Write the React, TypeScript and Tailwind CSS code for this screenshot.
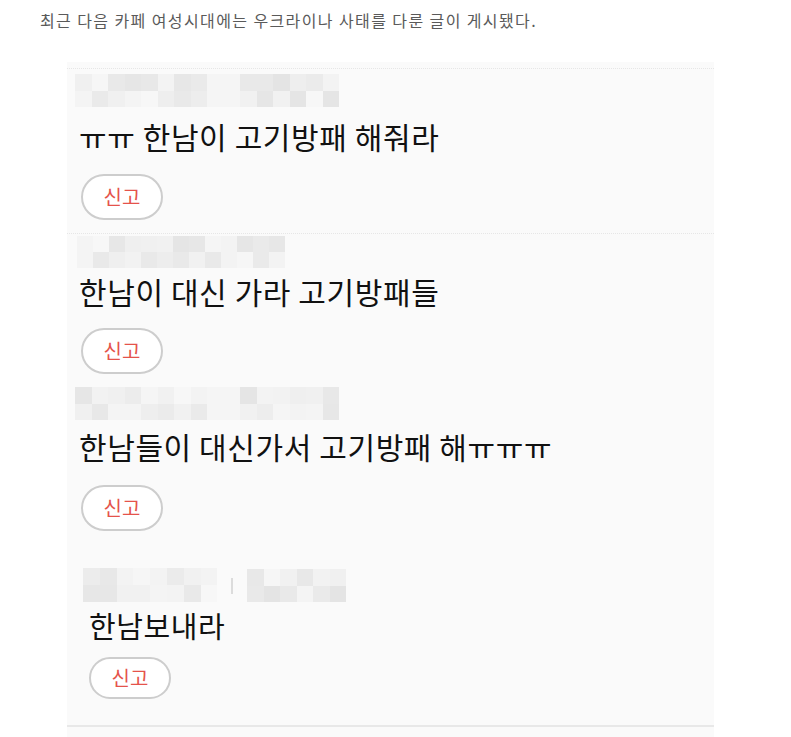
import React from 'react'

const font = { fontFamily: '"Noto Sans CJK KR", "Noto Sans", sans-serif' }

// deterministic gray shades for the pixelated (blurred) name blocks
function shades(seed: number, count: number) {
  const out: string[] = []
  let s = seed
  for (let i = 0; i < count; i++) {
    s = (s * 9301 + 49297) % 233280
    const v = 228 + Math.floor((s / 233280) * 20)
    out.push(`rgb(${v},${v},${v})`)
  }
  return out
}

function Mosaic({ cols, rows, cell, seed, light }: { cols: number; rows: number; cell: number; seed: number; light?: boolean }) {
  const c = shades(seed, cols * rows)
  return (
    <div className="grid" style={{ gridTemplateColumns: `repeat(${cols}, ${cell}px)` }}>
      {c.map((col, i) => (
        <div key={i} style={{ height: cell, background: light ? '#f5f5f5' : col }} />
      ))}
    </div>
  )
}

function ReportButton({ small }: { small?: boolean }) {
  return (
    <button
      className={`flex items-center justify-center rounded-full border-2 border-[#cdcdcd] bg-white text-[20px] text-[#e5534b] w-[82px] ${small ? 'h-[42px]' : 'h-[46px]'}`}
      style={font}
    >
      신고
    </button>
  )
}

export default function App() {
  return (
    <div className="min-h-[737px] w-[791px] bg-white" style={font}>
      <p className="pl-[40px] pt-[8px] text-[16px] leading-[24px] tracking-[1.4px] text-[#5a5a5a]">
        최근 다음 카페 여성시대에는 우크라이나 사태를 다룬 글이 게시됐다.
      </p>

      <div className="ml-[67px] mt-[30px] w-[647px] bg-[#fafafa] pt-[6px] pb-[12px]">
        {/* comment 1 */}
        <div className="border-t border-dotted border-[#e6e6e6]">
          <div className="ml-[8px] mt-[5px] flex h-[33px]">
            <Mosaic cols={8} rows={2} cell={16.5} seed={11} />
            <Mosaic cols={2} rows={2} cell={16.5} seed={3} light />
            <Mosaic cols={6} rows={2} cell={16.5} seed={27} />
          </div>
          <div className="ml-[12px] mt-[9px] h-[40px] text-[30px] leading-[40px] tracking-[0.6px] text-[#111]">ㅠㅠ 한남이 고기방패 해줘라</div>
          <div className="ml-[14px] mt-[18px]">
            <ReportButton />
          </div>
          <div className="mt-[13px] border-b border-dotted border-[#e6e6e6]" />
        </div>

        {/* comment 2 */}
        <div>
          <div className="ml-[10px] mt-[2px] flex h-[30px]">
            <Mosaic cols={13} rows={2} cell={16} seed={41} />
          </div>
          <div className="ml-[12px] mt-[5px] h-[40px] text-[30px] leading-[40px] tracking-[0.6px] text-[#111]">한남이 대신 가라 고기방패들</div>
          <div className="ml-[14px] mt-[17px]">
            <ReportButton />
          </div>
        </div>

        {/* comment 3 */}
        <div>
          <div className="ml-[8px] mt-[13px] flex h-[33px]">
            <Mosaic cols={8} rows={2} cell={16.5} seed={73} />
            <Mosaic cols={2} rows={2} cell={16.5} seed={5} light />
            <Mosaic cols={6} rows={2} cell={16.5} seed={97} />
          </div>
          <div className="ml-[12px] mt-[6px] h-[40px] text-[30px] leading-[40px] tracking-[0.6px] text-[#111]">한남들이 대신가서 고기방패 해ㅠㅠㅠ</div>
          <div className="ml-[14px] mt-[19px]">
            <ReportButton />
          </div>
        </div>

        {/* comment 4 */}
        <div>
          <div className="ml-[16px] mt-[38px] flex h-[33px] items-end">
            <Mosaic cols={8} rows={2} cell={16.8} seed={131} />
            <div className="mx-[14px] mb-[8px] h-[16px] w-[2px] bg-[#dcdcdc]" />
            <Mosaic cols={6} rows={2} cell={16.5} seed={151} />
          </div>
          <div className="ml-[22px] mt-[3px] h-[40px] text-[29px] leading-[40px] tracking-[0.6px] text-[#111]">한남보내라</div>
          <div className="ml-[22px] mt-[12px]">
            <ReportButton small />
          </div>
          <div className="mt-[26px] border-b-2 border-[#e8e8e8]" />
        </div>
      </div>
    </div>
  )
}
